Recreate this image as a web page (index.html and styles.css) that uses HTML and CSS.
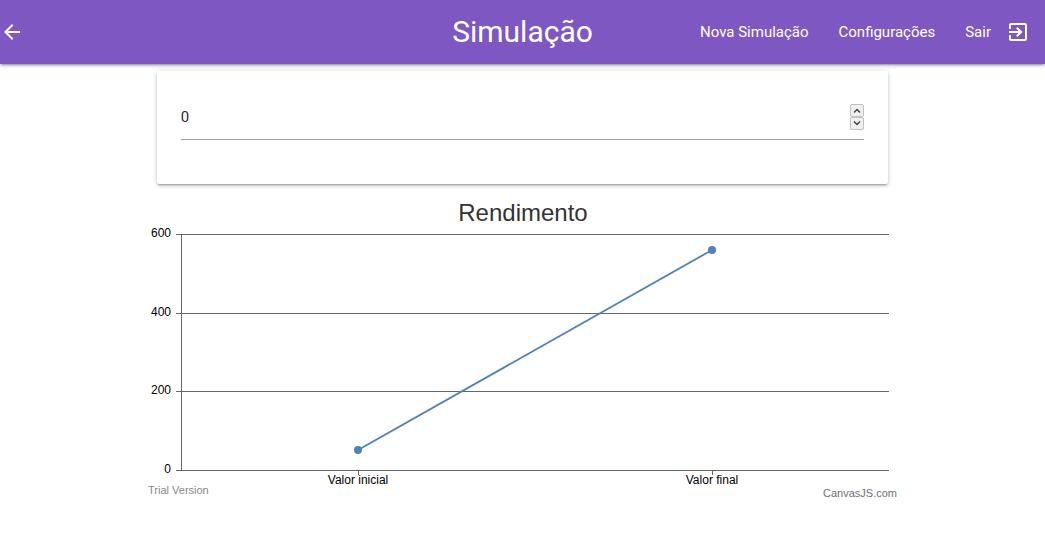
FILE: index.html
```html
<!DOCTYPE html>
<html lang="pt-BR">
<head>
<meta charset="utf-8">
<meta name="viewport" content="width=device-width, initial-scale=1">
<title>Simulação</title>
<link rel="stylesheet" href="styles.css">
</head>
<body>
<header class="navbar">
  <a class="back" href="#" aria-label="Voltar">
    <svg class="icon" viewBox="0 0 24 24" aria-hidden="true"><path d="M20 11H7.83l5.59-5.59L12 4l-8 8 8 8 1.41-1.41L7.83 13H20v-2z"/></svg>
  </a>
  <h1 class="brand">Simulação</h1>
  <nav class="links">
    <a class="link" href="#">Nova Simulação</a>
    <a class="link" href="#">Configurações</a>
    <a class="link" href="#">Sair</a>
    <a class="exit" href="#" aria-label="Sair da conta">
      <svg class="icon" viewBox="0 0 24 24" aria-hidden="true"><path d="M10.09 15.59L11.5 17l5-5-5-5-1.41 1.41L12.67 11H3v2h9.67l-2.58 2.59zM19 3H5c-1.11 0-2 .9-2 2v4h2V5h14v14H5v-4H3v4c0 1.1.89 2 2 2h14c1.1 0 2-.9 2-2V5c0-1.1-.9-2-2-2z"/></svg>
    </a>
  </nav>
</header>
<main>
  <section class="card">
    <div class="field">
      <input class="value" type="text" inputmode="numeric" value="0" aria-label="Valor">
      <div class="stepper">
        <button class="step" type="button" aria-label="Aumentar"><svg class="chevron" viewBox="0 0 8 6" aria-hidden="true"><path d="M1 4.500L4 1.500 7 4.500"/></svg></button>
        <button class="step step-down" type="button" aria-label="Diminuir"><svg class="chevron" viewBox="0 0 8 6" aria-hidden="true"><path d="M1 1.500L4 4.500 7 1.500"/></svg></button>
      </div>
    </div>
  </section>
  <figure class="chart">
    <svg class="plot" viewBox="0 0 749 310" role="img" aria-label="Rendimento">
      <text class="title" x="375" y="31">Rendimento</text>
      <g class="grid">
        <path d="M28 44.500H741M28 123.500H741M28 201.500H741M28 280.500H741M33.500 44V281M210.500 281V285M564.500 281V285"/>
      </g>
      <g class="ticks">
        <text x="23" y="47">600</text>
        <text x="23" y="126">400</text>
        <text x="23" y="204">200</text>
        <text x="23" y="283">0</text>
      </g>
      <g class="categories">
        <text x="210" y="294">Valor inicial</text>
        <text x="564" y="294">Valor final</text>
      </g>
      <path class="series" d="M210 260L564 60"/>
      <circle class="point" cx="210" cy="260" r="4"/>
      <circle class="point" cx="564" cy="60" r="4"/>
      <text class="trial" x="0" y="304">Trial Version</text>
      <a href="#"><text class="credit" x="749" y="307">CanvasJS.com</text></a>
    </svg>
  </figure>
</main>
</body>
</html>
```
FILE: styles.css
```css
* {
  box-sizing: border-box;
}

body {
  margin: 0;
  background: #fff;
  color: rgba(0, 0, 0, 0.87);
  font-family: Roboto, sans-serif;
  font-size: 15px;
  line-height: 24px;
}

.navbar {
  display: grid;
  grid-template-columns: 1fr auto 1fr;
  align-items: center;
  height: 64px;
  background: #7e57c2;
  color: #fff;
  box-shadow: 0 2px 2px 0 rgba(0, 0, 0, 0.14), 0 3px 1px -2px rgba(0, 0, 0, 0.12), 0 1px 5px 0 rgba(0, 0, 0, 0.2);
}

.navbar a {
  color: inherit;
  text-decoration: none;
}

.icon {
  display: block;
  width: 24px;
  height: 24px;
  fill: currentColor;
}

.back {
  justify-self: start;
}

.brand {
  margin: 0;
  font-size: 30px;
  font-weight: 400;
  line-height: 64px;
}

.links {
  display: flex;
  align-items: center;
  justify-self: end;
  white-space: nowrap;
}

.link {
  padding: 0 15px;
}

.exit {
  padding-right: 15px;
}

.card {
  width: 70%;
  margin: 7px auto 0;
  padding: 24px 24px 44px;
  border-radius: 2px;
  background: #fff;
  box-shadow: 0 2px 2px 0 rgba(0, 0, 0, 0.14), 0 3px 1px -2px rgba(0, 0, 0, 0.12), 0 1px 5px 0 rgba(0, 0, 0, 0.2);
}

.field {
  display: flex;
  align-items: center;
  height: 45px;
  border-bottom: 1px solid #9e9e9e;
}

.value {
  flex: 1;
  min-width: 0;
  height: 44px;
  padding: 0;
  border: 0;
  outline: 0;
  background: transparent;
  color: inherit;
  font: inherit;
}

.stepper {
  display: flex;
  flex-direction: column;
}

.step {
  display: flex;
  align-items: center;
  justify-content: center;
  width: 14px;
  height: 13px;
  padding: 0;
  border: 1px solid #c0c0c0;
  border-radius: 2px;
  background: #efefef;
}

.step-down {
  padding-bottom: 2px;
}

.chevron {
  width: 8px;
  height: 6px;
  fill: none;
  stroke: #444;
  stroke-width: 1.5;
}

.chart {
  width: 72%;
  max-width: 749px;
  margin: 6px auto 0;
}

.plot {
  display: block;
  width: 100%;
  font-family: "Liberation Sans", Arial, sans-serif;
  font-size: 12px;
}

.title {
  fill: #333;
  font-size: 24px;
  text-anchor: middle;
}

.grid {
  fill: none;
  stroke: #666;
  shape-rendering: crispEdges;
}

.ticks {
  text-anchor: end;
}

.categories {
  text-anchor: middle;
}

.series {
  fill: none;
  stroke: #4f81bc;
  stroke-width: 1.8;
}

.point {
  fill: #4f81bc;
}

.trial {
  fill: #888;
  font-size: 11px;
}

.credit {
  fill: #707070;
  font-size: 11px;
  text-anchor: end;
}
```
